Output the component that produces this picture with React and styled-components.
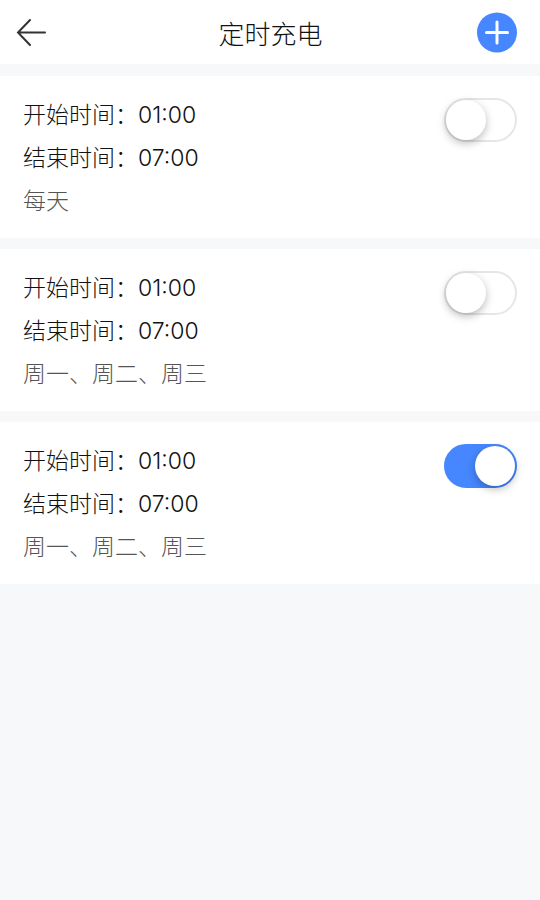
import React, { useState } from "react";
import styled, { createGlobalStyle } from "styled-components";

const Global = createGlobalStyle`
  *, *::before, *::after { box-sizing: border-box; }
  body {
    margin: 0;
    background: #f7f8fa;
    color: #111;
    font-family: Inter, "Noto Sans CJK SC", sans-serif;
    font-weight: 300;
  }
  button { font: inherit; color: inherit; }
`;

const Page = styled.div`
  min-height: 100vh;
  background: #f7f8fa;
`;

const Header = styled.header`
  display: grid;
  grid-template-columns: 60px 1fr 48px;
  align-items: center;
  height: 64px;
  padding: 0 19px 0 8px;
  background: #fff;
`;

const Title = styled.h1`
  margin: 0;
  padding-top: 6px;
  font-size: 26px;
  line-height: 36px;
  font-weight: 300;
  text-align: center;
`;

const IconButton = styled.button`
  display: flex;
  align-items: center;
  justify-content: center;
  width: 48px;
  height: 48px;
  padding: 0;
  border: 0;
  background: none;
  cursor: pointer;
`;

const List = styled.ul`
  display: flex;
  flex-direction: column;
  gap: 11px;
  margin: 0;
  padding: 12px 0 0;
  list-style: none;
`;

const Schedule = styled.li`
  display: flex;
  align-items: flex-start;
  justify-content: space-between;
  padding: 18px 23px 15px;
  background: #fff;
`;

const Details = styled.label`
  display: flex;
  flex-direction: column;
`;

const Line = styled.span`
  font-size: 23px;
  line-height: 43px;
  color: ${(p) => (p.$muted ? "#555" : "#111")};
`;

const Switch = styled.input`
  appearance: none;
  flex: none;
  display: flex;
  align-items: center;
  width: 73px;
  height: 44px;
  margin: 4px 0 0;
  padding: 0;
  border: 2px solid #e6e6e6;
  border-radius: 22px;
  background: #fff;
  cursor: pointer;

  &::before {
    content: "";
    width: 40px;
    height: 40px;
    border-radius: 50%;
    background: #fff;
    box-shadow: 0 3px 8px rgba(0, 0, 0, 0.28);
  }

  &:checked {
    justify-content: flex-end;
    border-color: #4687ff;
    background: #4687ff;
  }
`;

const initialSchedules = [
  { id: "a", start: "01:00", end: "07:00", days: "每天", on: false },
  { id: "b", start: "01:00", end: "07:00", days: "周一、周二、周三", on: false },
  { id: "c", start: "01:00", end: "07:00", days: "周一、周二、周三", on: true },
];

export default function App() {
  const [schedules, setSchedules] = useState(initialSchedules);
  const toggle = (id) =>
    setSchedules((all) => all.map((s) => (s.id === id ? { ...s, on: !s.on } : s)));

  return (
    <Page lang="zh-CN">
      <Global />
      <Header>
        <IconButton type="button" aria-label="返回">
          <svg width="32" height="28" viewBox="0 0 32 28" fill="none" stroke="#333" strokeWidth="2" strokeLinecap="round">
            <path d="M29 14.5H2M14 2L2 14.5L14 27" />
          </svg>
        </IconButton>
        <Title>定时充电</Title>
        <IconButton type="button" aria-label="添加">
          <svg width="42" height="42" viewBox="0 0 42 42" fill="none">
            <circle cx="21" cy="21.5" r="20" fill="#4687ff" />
            <path d="M10.5 21.5H31.5M21 11V32" stroke="#fff" strokeWidth="3" strokeLinecap="round" />
          </svg>
        </IconButton>
      </Header>
      <List>
        {schedules.map((s) => (
          <Schedule key={s.id}>
            <Details htmlFor={s.id}>
              <Line>开始时间：<time>{s.start}</time></Line>
              <Line>结束时间：<time>{s.end}</time></Line>
              <Line $muted>{s.days}</Line>
            </Details>
            <Switch id={s.id} type="checkbox" role="switch" checked={s.on} onChange={() => toggle(s.id)} />
          </Schedule>
        ))}
      </List>
    </Page>
  );
}
